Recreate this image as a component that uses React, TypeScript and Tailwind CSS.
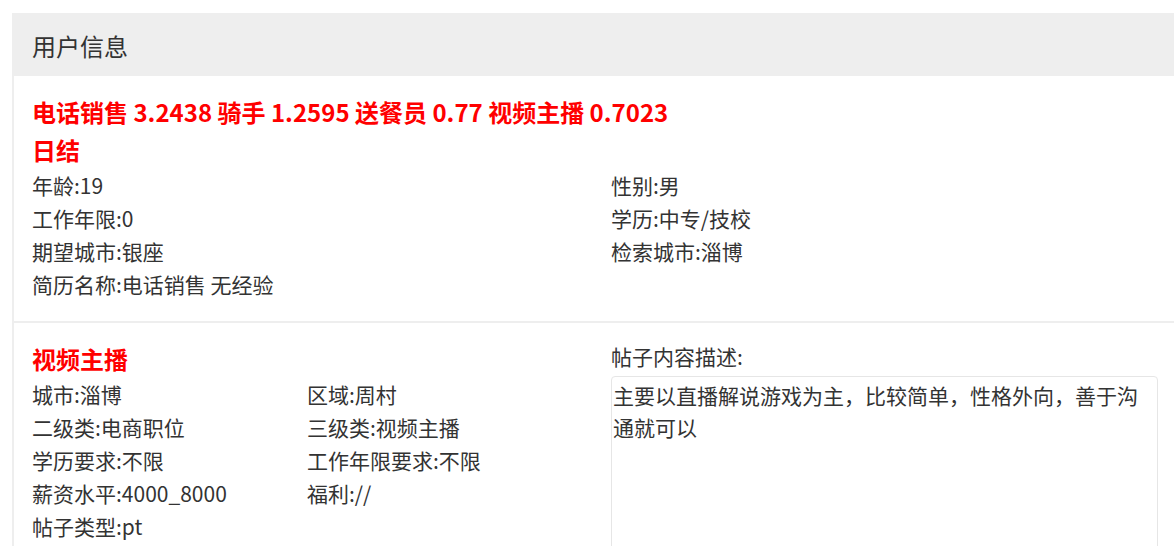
const font = { fontFamily: '"Noto Sans CJK SC", "Microsoft YaHei", "Noto Sans", sans-serif' }

function Row({ text }: { text: string }) {
  return <div className="h-[33px] leading-[33px] whitespace-nowrap">{text}</div>
}

export default function App() {
  return (
    <div className="w-full h-[546px] overflow-hidden bg-white" style={font}>
      <div className="ml-[12px] mt-[13px] w-[1190px] border-2 border-[#eeeeee] text-[#333333]">
        <div className="h-[61px] bg-[#eeeeee] flex items-center pl-[18px] text-[24px]">用户信息</div>

        <div className="pl-[18px] pt-[17px] pb-[20px]">
          <div className="text-[24px] leading-[38px] font-bold text-[#ff0000] whitespace-nowrap">
            电话销售 3.2438 骑手 1.2595 送餐员 0.77 视频主播 0.7023
            <br />
            日结
          </div>
          <div className="grid grid-cols-[579px_1fr] text-[21px]">
            <Row text="年龄:19" />
            <Row text="性别:男" />
            <Row text="工作年限:0" />
            <Row text="学历:中专/技校" />
            <Row text="期望城市:银座" />
            <Row text="检索城市:淄博" />
            <Row text="简历名称:电话销售 无经验" />
            <div />
          </div>
        </div>

        <div className="border-t-2 border-[#eeeeee] pl-[18px] pt-[17px] grid grid-cols-[579px_547px] text-[21px]">
          <div>
            <div className="text-[24px] leading-[38px] font-bold text-[#ff0000]">视频主播</div>
            <div className="grid grid-cols-[275px_1fr]">
              <Row text="城市:淄博" />
              <Row text="区域:周村" />
              <Row text="二级类:电商职位" />
              <Row text="三级类:视频主播" />
              <Row text="学历要求:不限" />
              <Row text="工作年限要求:不限" />
              <Row text="薪资水平:4000_8000" />
              <Row text="福利://" />
              <Row text="帖子类型:pt" />
            </div>
          </div>
          <div>
            <div className="h-[33px] leading-[33px]">帖子内容描述:</div>
            <textarea
              readOnly
              defaultValue="主要以直播解说游戏为主，比较简单，性格外向，善于沟通就可以"
              className="mt-[3px] block w-[547px] h-[220px] resize-none border border-[#e6e6e6] rounded-[4px] pt-[2px] px-[1px] text-[21px] leading-[32px] text-[#333333] outline-none"
              style={font}
            />
          </div>
        </div>
      </div>
    </div>
  )
}
